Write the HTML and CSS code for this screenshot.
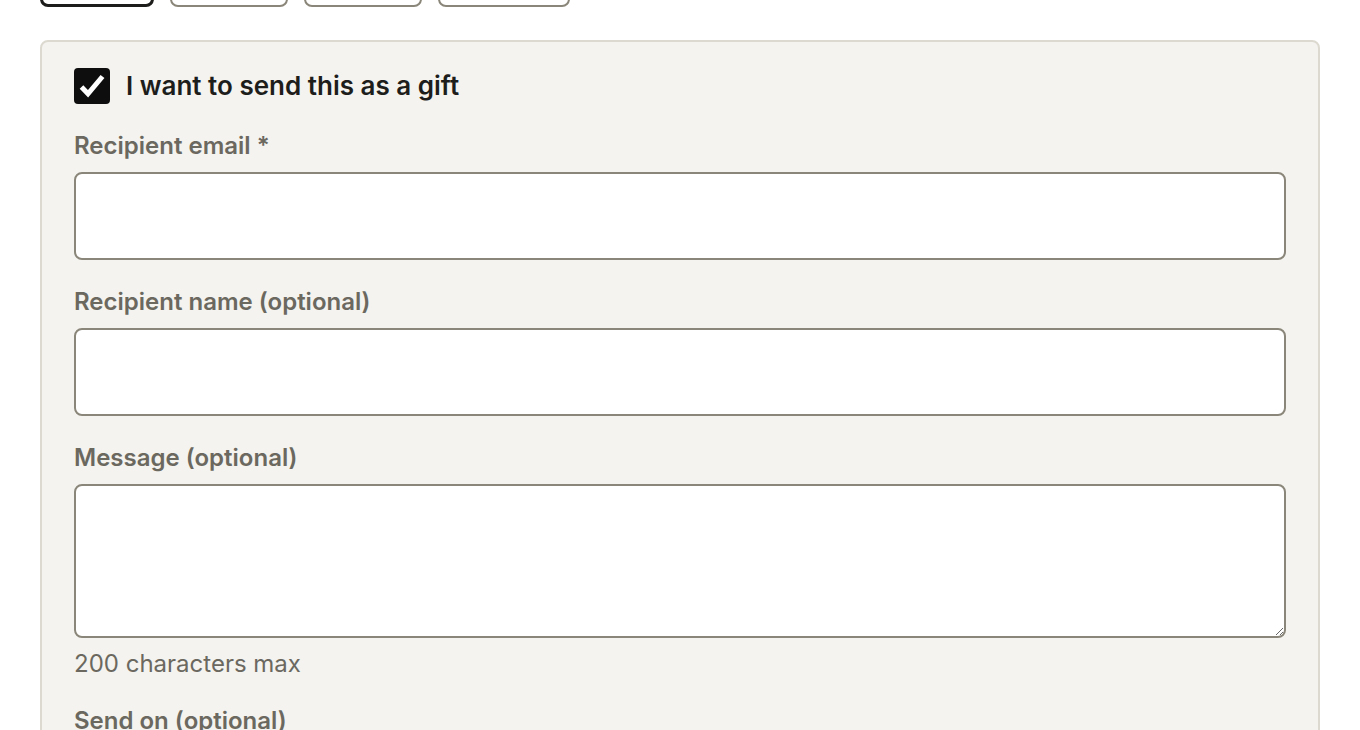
FILE: index.html
```html
<!DOCTYPE html>
<html lang="en">
<head>
<meta charset="UTF-8">
<meta name="viewport" content="width=device-width, initial-scale=1.0">
<title>Gift options</title>
<link rel="stylesheet" href="styles.css">
</head>
<body>
<div class="plans">
  <button class="plan selected" aria-label="1 month"></button>
  <button class="plan" aria-label="3 months"></button>
  <button class="plan" aria-label="6 months"></button>
  <button class="plan wide" aria-label="12 months"></button>
</div>

<div class="gift-box">
  <label class="gift-toggle">
    <span class="check">
      <svg width="36" height="36" viewBox="0 0 36 36">
        <path d="M7.5 19 L14 25.8 L28.5 8.5" fill="none" stroke="#fff" stroke-width="5" stroke-linejoin="miter"/>
      </svg>
    </span>
    <span>I want to send this as a gift</span>
  </label>

  <label class="field-label" for="email">Recipient email *</label>
  <input class="field" id="email" type="email">

  <label class="field-label" for="name">Recipient name (optional)</label>
  <input class="field" id="name" type="text">

  <label class="field-label" for="message">Message (optional)</label>
  <textarea class="field message" id="message" maxlength="200"></textarea>
  <p class="hint">200 characters max</p>

  <label class="field-label" for="date">Send on (optional)</label>
  <input class="field" id="date" type="text">
</div>
</body>
</html>
```

FILE: styles.css
```css
body {
  font-family: Inter, "Noto Sans", sans-serif;
  margin: 0;
  padding: 0 40px;
  background-color: #fff;
  color: #1d1d1b;
}
.plans {
  display: flex;
  gap: 16px;
  margin-top: -41px;
  margin-bottom: 33px;
}
.plan {
  height: 48px;
  width: 118px;
  background: #fff;
  border: 2px solid #8a8679;
  border-radius: 8px;
}
.plan.selected {
  width: 114px;
  border: 3px solid #1d1d1b;
}
.plan.wide {
  width: 132px;
}
.gift-box {
  background-color: #f4f3ef;
  border: 2px solid #dcd9d0;
  border-radius: 8px;
  padding: 26px 32px 40px;
  display: flex;
  flex-direction: column;
}
.gift-toggle {
  display: flex;
  align-items: center;
  gap: 16px;
  font-size: 26px;
  font-weight: 600;
  line-height: 36px;
  margin-bottom: 25px;
}
.check {
  width: 36px;
  height: 36px;
  background-color: #0e0e0e;
  border-radius: 4px;
  display: block;
}
.check svg {
  display: block;
}
.field-label {
  display: block;
  font-size: 24px;
  font-weight: 600;
  line-height: 32px;
  color: #6b6860;
  padding-top: 1px;
  margin-bottom: 10px;
}
.field {
  box-sizing: border-box;
  width: 100%;
  height: 88px;
  background: #fff;
  border: 2px solid #8a8679;
  border-radius: 8px;
  font-family: inherit;
  font-size: 20px;
  padding: 12px 16px;
  margin: 0 0 25px;
}
.message {
  height: 154px;
  resize: vertical;
  margin-bottom: 0;
}
.hint {
  font-size: 24px;
  line-height: 32px;
  color: #6b6860;
  margin: 10px 0 24px;
}
```
